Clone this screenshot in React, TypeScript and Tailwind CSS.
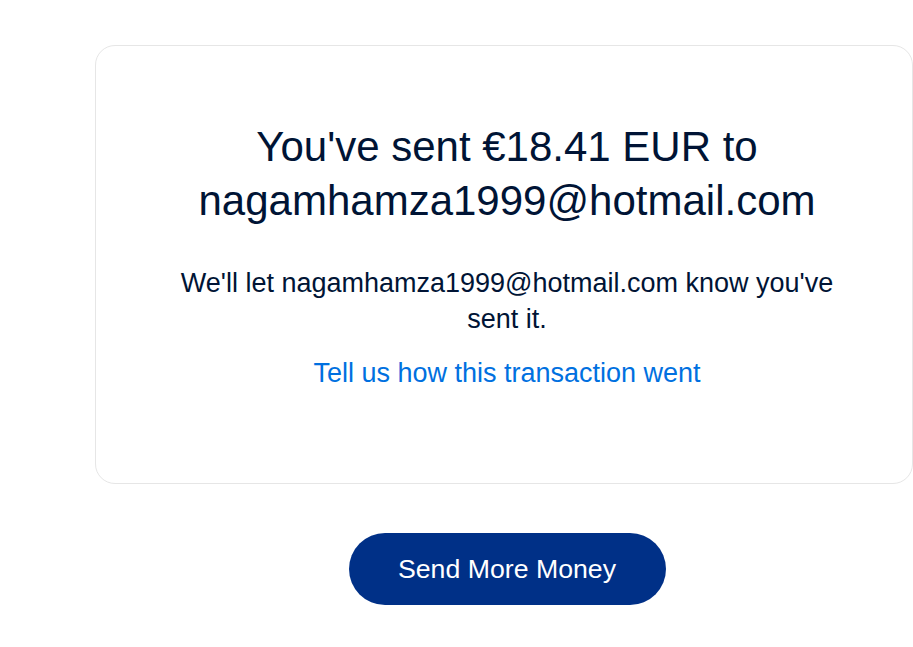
import React from 'react';

export default function App() {
  const recipient = 'nagamhamza1999@hotmail.com';

  return (
    <div className="min-h-[647px] w-[913px] overflow-hidden bg-white font-['Liberation_Sans',Arial,sans-serif]">
      <div className="ml-[95px] w-[818px] pt-[45px]">
        <div className="flex flex-col items-center rounded-[20px] border border-[#e6e6e6] pl-[60px] pr-[54px] pt-[74px] pb-[92px] text-center">
          <h1 className="max-w-[680px] text-[42px] leading-[54px] font-normal text-[#001435]">
            {`You've sent €18.41 EUR to ${recipient}`}
          </h1>
          <p className="mt-[37px] max-w-[680px] text-[27px] leading-[36px] text-[#001435]">
            {`We'll let ${recipient} know you've sent it.`}
          </p>
          <a
            href="#"
            className="mt-[18px] text-[27px] leading-[36px] text-[#0070e0]"
          >
            Tell us how this transaction went
          </a>
        </div>

        <div className="mt-[49px] flex justify-center pl-[6px]">
          <button className="h-[72px] w-[317px] rounded-full bg-[#003087] text-[26.7px] text-white">
            Send More Money
          </button>
        </div>
      </div>
    </div>
  );
}
